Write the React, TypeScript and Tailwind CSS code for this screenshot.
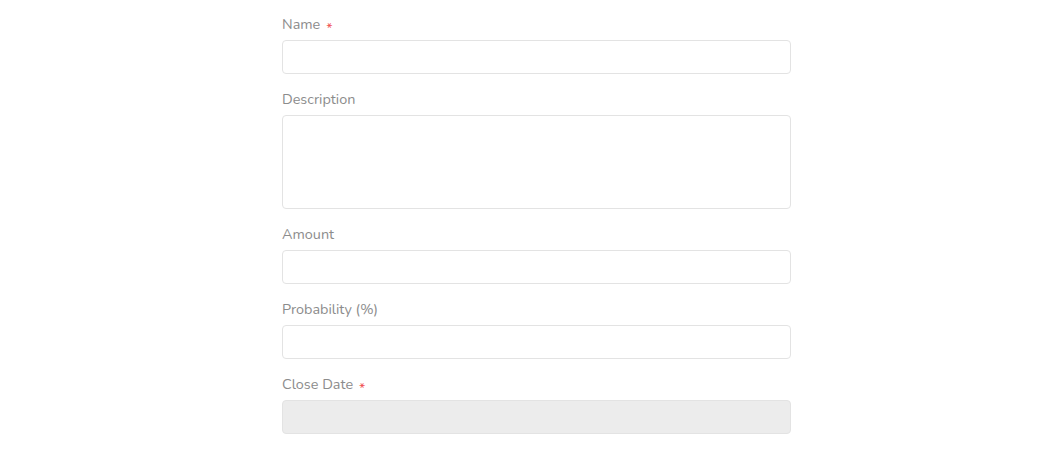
import React from "react";

function Field({ label, required, children }: { label: string; required?: boolean; children: React.ReactNode }) {
  return (
    <div className="mb-4">
      <label className="flex h-5 items-center text-[14.4px] text-[#8c8c8c] mb-[5px]">
        {label}
        {required && <span className="ml-[6px] translate-y-[3px] text-[#f05252] text-[14px]">*</span>}
      </label>
      {children}
    </div>
  );
}

export default function App() {
  const inputCls = "block w-full h-[34px] rounded-[4px] border border-[#e3e3e3] bg-white outline-none";
  return (
    <div className="min-h-screen bg-white" style={{ fontFamily: "Nunito, Lato, 'Open Sans', sans-serif" }}>
      <div className="pl-[282px] pt-[15px]">
        <div className="w-[509px]">
          <Field label="Name" required>
            <input className={inputCls} />
          </Field>
          <Field label="Description">
            <textarea className="block w-full h-[94px] rounded-[4px] border border-[#e3e3e3] bg-white outline-none resize-none" />
          </Field>
          <Field label="Amount">
            <input className={inputCls} />
          </Field>
          <Field label="Probability (%)">
            <input className={inputCls} />
          </Field>
          <Field label="Close Date" required>
            <input disabled className="block w-full h-[34px] rounded-[4px] border border-[#e3e3e3] bg-[#ececec] outline-none" />
          </Field>
        </div>
      </div>
    </div>
  );
}
